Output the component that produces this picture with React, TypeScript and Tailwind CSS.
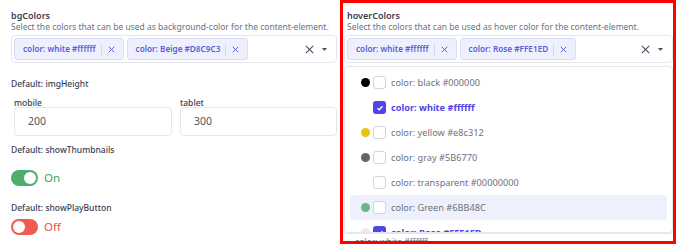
import React from 'react'

const font = { fontFamily: '"Noto Sans", "Open Sans", sans-serif' }

function Chip({ label }: { label: string }) {
  return (
    <div className="flex items-center h-[22px] rounded-[3px] bg-[#eef0fd] border border-[#d9dcf7] pl-[8px] pr-[8px] text-[8.2px] font-semibold leading-[10px] text-[#5b5fd3] whitespace-nowrap">
      <span>{label}</span>
      <span className="ml-[5px] mr-[6px] w-px h-[11px] bg-[#d0d3f3]" />
      <svg width="7" height="7" viewBox="0 0 7 7" className="stroke-[#5b5fd3]">
        <path d="M0.8 0.8L6.2 6.2M6.2 0.8L0.8 6.2" strokeWidth="1" />
      </svg>
    </div>
  )
}

function Caret() {
  return (
    <svg width="5" height="3" viewBox="0 0 5 3" className="fill-[#4b5563]">
      <path d="M0 0H5L2.5 3Z" />
    </svg>
  )
}

function MultiSelect({ chips }: { chips: string[] }) {
  return (
    <div className="flex items-center h-[28px] rounded-[4px] border border-gray-200 bg-white pl-[2px] pr-[9px]">
      <div className="flex items-center gap-[3px] flex-1">
        {chips.map((c) => (
          <Chip key={c} label={c} />
        ))}
      </div>
      <svg width="9" height="9" viewBox="0 0 9 9" className="stroke-[#4b5563]">
        <path d="M0.8 0.8L8.2 8.2M8.2 0.8L0.8 8.2" strokeWidth="1.2" />
      </svg>
      <span className="ml-[8px]">
        <Caret />
      </span>
    </div>
  )
}

function Toggle({ on }: { on: boolean }) {
  return (
    <div className="flex items-center gap-[6px] h-[16px]">
      <div
        className={`flex items-center w-[27px] h-[16px] rounded-full px-[2px] ${
          on ? 'bg-[#4caf6c] justify-end' : 'bg-[#ef5b50] justify-start'
        }`}
      >
        <div className="w-[12px] h-[12px] rounded-full bg-white" />
      </div>
      <span className={`text-[11.5px] leading-[16px] ${on ? 'text-[#4a9e66]' : 'text-[#e5534b]'}`}>
        {on ? 'On' : 'Off'}
      </span>
    </div>
  )
}

const items = [
  { label: 'color: black #000000', dot: '#000000', checked: false },
  { label: 'color: white #ffffff', dot: '', checked: true },
  { label: 'color: yellow #e8c312', dot: '#e8c312', checked: false },
  { label: 'color: gray #5B6770', dot: '#5B6770', checked: false },
  { label: 'color: transparent #00000000', dot: '', checked: false },
  { label: 'color: Green #6BB48C', dot: '#6BB48C', checked: false, hover: true },
  { label: 'color: Rose #FFE1ED', dot: '#FFE1ED', checked: true },
]

export default function App() {
  return (
    <div style={font} className="flex w-[681px] h-[247px] overflow-hidden bg-white text-[#374151]">
      <div className="w-[340px] shrink-0 pl-[11px] pr-[3px] pt-[10px]">
        <div className="text-[9px] font-semibold leading-[11px] text-[#374151]">bgColors</div>
        <div className="text-[8.5px] leading-[11px] text-[#6b7280] whitespace-nowrap">
          Select the colors that can be used as background-color for the content-element.
        </div>
        <div className="mt-[3px]">
          <MultiSelect chips={['color: white #ffffff', 'color: Beige #D8C9C3']} />
        </div>

        <div className="mt-[15px] text-[8.5px] font-medium leading-[11px]">Default: imgHeight</div>
        <div className="mt-[9px] pl-[3px] flex gap-[8px]">
          <div className="w-[158px]">
            <div className="text-[8.5px] font-medium leading-[9px]">mobile</div>
            <div className="h-[29px] rounded-[4px] border border-gray-200 flex items-center pl-[13px] text-[10.5px] text-[#4b5563]">
              200
            </div>
          </div>
          <div className="w-[157px]">
            <div className="text-[8.5px] font-medium leading-[9px]">tablet</div>
            <div className="h-[29px] rounded-[4px] border border-gray-200 flex items-center pl-[13px] text-[10.5px] text-[#4b5563]">
              300
            </div>
          </div>
        </div>

        <div className="mt-[8px] text-[8.5px] font-medium leading-[11px]">Default: showThumbnails</div>
        <div className="mt-[15px]">
          <Toggle on />
        </div>
        <div className="mt-[16px] text-[8.5px] font-medium leading-[11px]">Default: showPlayButton</div>
        <div className="mt-[6px]">
          <Toggle on={false} />
        </div>
      </div>

      <div className="w-[336px] h-[244px] shrink-0 border-[3px] border-[#ff0000] overflow-hidden pt-[7px] pl-[1px]">
        <div className="pl-[3px] text-[9px] font-semibold leading-[11px]">hoverColors</div>
        <div className="pl-[3px] text-[8.5px] leading-[11px] text-[#6b7280] whitespace-nowrap">
          Select the colors that can be used as hover color for the content-element.
        </div>
        <div className="mt-[3px]">
          <MultiSelect chips={['color: white #ffffff', 'color: Rose #FFE1ED']} />
        </div>
        <div className="mt-[3px] h-[167px] overflow-hidden rounded-[4px] border border-gray-200 shadow-[0_2px_6px_rgba(0,0,0,0.08)] px-[5px] pt-[3px]">
          {items.map((it) => (
            <div
              key={it.label}
              className={`flex items-center h-[25px] rounded-[4px] pl-[11px] ${it.hover ? 'bg-[#eef0fb]' : ''}`}
            >
              <span
                className="w-[9px] h-[9px] rounded-full shrink-0"
                style={{ backgroundColor: it.dot || 'transparent' }}
              />
              {it.checked ? (
                <span className="ml-[3px] w-[13px] h-[13px] rounded-[3px] bg-[#5046e5] flex items-center justify-center shrink-0">
                  <svg width="8" height="8" viewBox="0 0 8 8" fill="none" className="stroke-white">
                    <path d="M1.5 4.2L3.2 5.8L6.5 2.3" strokeWidth="1.4" />
                  </svg>
                </span>
              ) : (
                <span className="ml-[3px] w-[13px] h-[13px] rounded-[3px] border border-gray-300 bg-white shrink-0" />
              )}
              <span
                className={`ml-[5px] text-[9.2px] leading-[12px] whitespace-nowrap ${
                  it.checked ? 'font-bold text-[#5046e5]' : 'text-[#6b7280]'
                }`}
              >
                {it.label}
              </span>
            </div>
          ))}
        </div>
        <div className="flex items-start h-[20px] border-t border-gray-200 pl-[11px] pr-[11px] pt-[3px] bg-white">
          <span className="flex-1 text-[8.6px] leading-[11px] text-[#6b7280] whitespace-nowrap">
            color: white #ffffff
          </span>
          <span className="pt-[5px]">
            <Caret />
          </span>
        </div>
      </div>
    </div>
  )
}
